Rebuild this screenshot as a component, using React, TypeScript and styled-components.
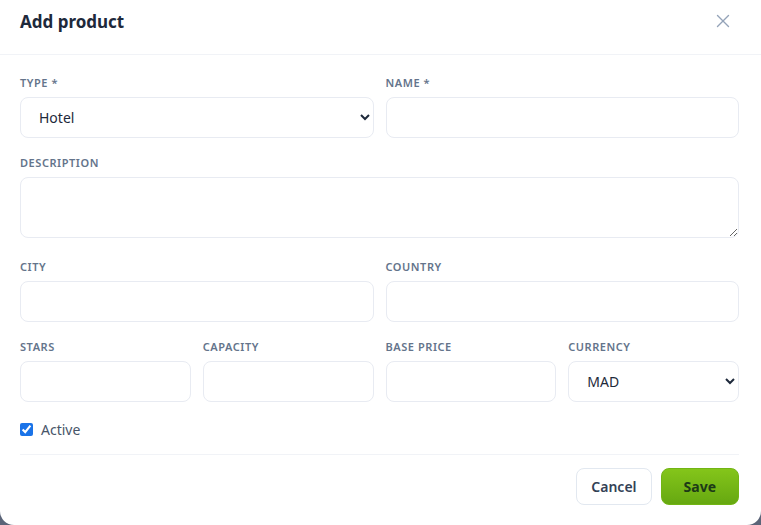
import React, { useState } from 'react';
import styled, { createGlobalStyle } from 'styled-components';
import { X } from 'lucide-react';

const GlobalStyle = createGlobalStyle`
	html, body {
		margin: 0;
		padding: 0;
		background: #5b6478;
	}
	body {
		font-family: 'Noto Sans', 'Open Sans', sans-serif;
	}
	* {
		box-sizing: border-box;
	}
`;

const Modal = styled.div`
	width: 761px;
	height: 525px;
	background: #ffffff;
	border-radius: 0 0 14px 14px;
	display: flex;
	flex-direction: column;
	overflow: hidden;
`;

const Header = styled.div`
	display: flex;
	align-items: center;
	justify-content: space-between;
	height: 55px;
	padding: 0 27px 0 20px;
	border-bottom: 1px solid #f1f3f7;
`;

const Title = styled.h2`
	margin: 0 0 12px;
	font-size: 17px;
	font-weight: 700;
	color: #1e293b;
`;

const CloseButton = styled.button`
	display: flex;
	align-items: center;
	justify-content: center;
	margin-bottom: 12px;
	padding: 0;
	border: none;
	background: none;
	color: #94a3b8;
	cursor: pointer;
`;

const Body = styled.div`
	display: flex;
	flex-direction: column;
	padding: 20px 22px 0 20px;
`;

const Grid = styled.div<{ cols: number }>`
	display: grid;
	grid-template-columns: repeat(${({ cols }) => cols}, 1fr);
	column-gap: 12px;
	margin-bottom: 17px;
`;

const Field = styled.div`
	display: flex;
	flex-direction: column;
	min-width: 0;
`;

const Label = styled.label`
	height: 16px;
	line-height: 16px;
	margin-bottom: 6px;
	font-size: 11px;
	font-weight: 600;
	letter-spacing: 0.05em;
	text-transform: uppercase;
	color: #64748b;
`;

const Input = styled.input`
	height: 41px;
	width: 100%;
	padding: 0 14px;
	border: 1px solid #e8ebf2;
	border-radius: 8px;
	background: #ffffff;
	font-family: inherit;
	font-size: 14px;
	color: #1e293b;
	outline: none;
`;

const Select = styled.select`
	height: 41px;
	width: 100%;
	padding: 0 10px 0 14px;
	border: 1px solid #e8ebf2;
	border-radius: 8px;
	background: #ffffff;
	font-family: inherit;
	font-size: 14px;
	color: #1e293b;
	outline: none;
`;

const TextArea = styled.textarea`
	display: block;
	height: 61px;
	width: 100%;
	margin-bottom: 4px;
	padding: 10px 14px;
	border: 1px solid #e8ebf2;
	border-radius: 8px;
	font-family: inherit;
	font-size: 14px;
	color: #1e293b;
	resize: vertical;
	outline: none;
`;

const CheckRow = styled.label`
	display: flex;
	align-items: center;
	gap: 8px;
	height: 20px;
	font-size: 14px;
	color: #475569;
	padding-bottom: 15px;
	box-sizing: content-box;
	border-bottom: 1px solid #f1f3f7;
`;

const Check = styled.input`
	width: 13px;
	height: 13px;
	margin: 0;
	accent-color: #1a73e8;
`;

const Footer = styled.div`
	display: flex;
	justify-content: flex-end;
	gap: 9px;
	padding-top: 13px;
`;

const Button = styled.button<{ primary?: boolean }>`
	height: 37px;
	padding: 0 ${({ primary }) => (primary ? '22px' : '14px')};
	border-radius: 8px;
	border: 1px solid ${({ primary }) => (primary ? '#72b514' : '#e2e8f0')};
	background: ${({ primary }) =>
		primary ? 'linear-gradient(180deg, #84c51a 0%, #66a811 100%)' : '#ffffff'};
	font-family: inherit;
	font-size: 14px;
	font-weight: ${({ primary }) => (primary ? 700 : 600)};
	color: ${({ primary }) => (primary ? '#1d3a17' : '#334155')};
	cursor: pointer;
`;

export default function App() {
	const [active, setActive] = useState(true);

	return (
		<>
			<GlobalStyle />
			<Modal>
				<Header>
					<Title>Add product</Title>
					<CloseButton type="button" aria-label="Close">
						<X size={22} strokeWidth={1.5} />
					</CloseButton>
				</Header>

				<Body>
					<Grid cols={2}>
						<Field>
							<Label>Type *</Label>
							<Select defaultValue="hotel">
								<option value="hotel">Hotel</option>
								<option value="activity">Activity</option>
								<option value="transfer">Transfer</option>
							</Select>
						</Field>
						<Field>
							<Label>Name *</Label>
							<Input />
						</Field>
					</Grid>

					<Grid cols={1}>
						<Field>
							<Label>Description</Label>
							<TextArea />
						</Field>
					</Grid>

					<Grid cols={2}>
						<Field>
							<Label>City</Label>
							<Input />
						</Field>
						<Field>
							<Label>Country</Label>
							<Input />
						</Field>
					</Grid>

					<Grid cols={4}>
						<Field>
							<Label>Stars</Label>
							<Input type="number" />
						</Field>
						<Field>
							<Label>Capacity</Label>
							<Input type="number" />
						</Field>
						<Field>
							<Label>Base price</Label>
							<Input type="number" />
						</Field>
						<Field>
							<Label>Currency</Label>
							<Select defaultValue="MAD">
								<option value="MAD">MAD</option>
								<option value="EUR">EUR</option>
								<option value="USD">USD</option>
							</Select>
						</Field>
					</Grid>

					<CheckRow>
						<Check
							type="checkbox"
							checked={active}
							onChange={(e) => setActive(e.target.checked)}
						/>
						Active
					</CheckRow>

					<Footer>
						<Button type="button">Cancel</Button>
						<Button type="button" primary>
							Save
						</Button>
					</Footer>
				</Body>
			</Modal>
		</>
	);
}
